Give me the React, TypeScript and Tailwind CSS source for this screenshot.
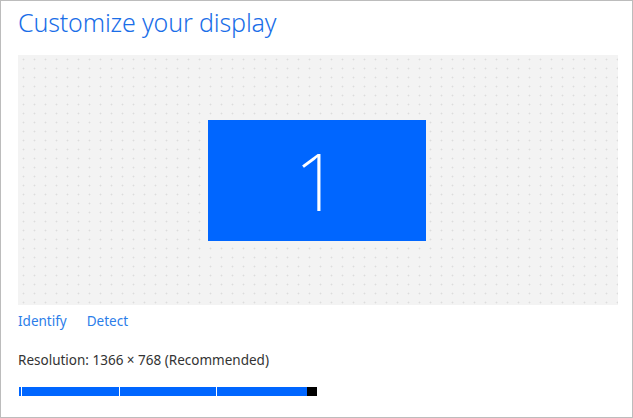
export default function App() {
  return (
    <div className="w-[633px] h-[418px] bg-white border border-[#bcbcbc] pl-[17px] flex flex-col" style={{ fontFamily: '"Noto Sans", "Open Sans", sans-serif' }}>
      <h1 className="text-[25px] leading-[34px] font-light text-[#1a6ee8] mt-[4px] tracking-[-0.15px]">Customize your display</h1>
      <div className="mt-[16px] w-[600px] h-[250px] pr-[2px] bg-[#f3f3f3] bg-[radial-gradient(circle,#dcdcdc_0.8px,transparent_1.1px)] bg-[length:11px_9px] flex items-center justify-center">
        <div className="w-[218px] h-[121px] bg-[#0066ff] flex items-center justify-center">
          <span className="text-white text-[80px] leading-none font-extralight">1</span>
        </div>
      </div>
      <div className="flex gap-[20px] mt-[6px] text-[13.5px] text-[#2b7de9] leading-[20px]">
        <span>Identify</span>
        <span>Detect</span>
      </div>
      <div className="mt-[20px] text-[13.5px] text-[#333] leading-[18px]">Resolution: 1366 × 768 (Recommended)</div>
      <div className="mt-[18px] ml-[1px] w-[298px] h-[9px] flex">
        <div className="w-[2px] bg-[#0066ff]" />
        <div className="w-[1px] bg-white" />
        <div className="w-[97px] bg-[#0066ff]" />
        <div className="w-[1px] bg-white" />
        <div className="w-[96px] bg-[#0066ff]" />
        <div className="w-[1px] bg-white" />
        <div className="w-[90px] bg-[#0066ff]" />
        <div className="w-[10px] bg-black" />
      </div>
    </div>
  );
}
